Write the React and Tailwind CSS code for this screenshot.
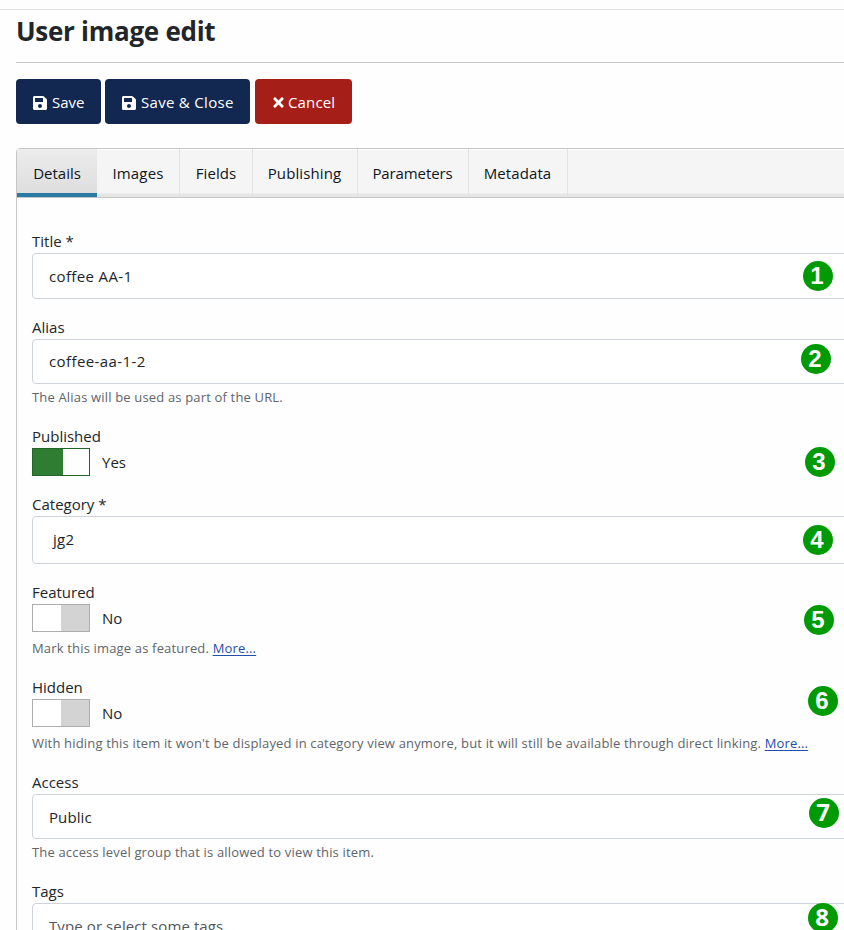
import React from "react";
import { FaSave, FaTimes } from "react-icons/fa";

const tabs = [
  { label: "Details", box: "w-20", text: "" },
  { label: "Images", box: "w-[83px]", text: "tracking-[0.15px]" },
  { label: "Fields", box: "w-[73px]", text: "tracking-[0.1px]" },
  { label: "Publishing", box: "w-[105px]", text: "tracking-[0.12px] -ml-px" },
  { label: "Parameters", box: "w-[111px]", text: "tracking-[-0.1px] -ml-px" },
  { label: "Metadata", box: "w-[99px]", text: "tracking-[0.1px] -ml-px" },
];

const markers = [
  { n: 1, pos: "left-[802.5px] top-[260.5px]", font: "font-['Liberation_Sans']" },
  { n: 2, pos: "left-[800.5px] top-[343.5px]", font: "font-['Liberation_Sans']" },
  { n: 3, pos: "left-[804.5px] top-[446.5px]", font: "font-['Liberation_Sans']" },
  { n: 4, pos: "left-[802.5px] top-[524.5px]", font: "font-['Liberation_Sans']" },
  { n: 5, pos: "left-[803.5px] top-[604.5px]", font: "font-['Liberation_Sans']" },
  { n: 6, pos: "left-[807.5px] top-[685.5px]", font: "font-['Liberation_Sans']" },
  { n: 7, pos: "left-[808.5px] top-[797.5px]", font: "font-['Open_Sans'] pb-0.5" },
  { n: 8, pos: "left-[807.5px] top-[902.5px]", font: "font-['Open_Sans'] pb-0.5" },
];

function Field({ label, children }) {
  return (
    <div className="flex flex-col">
      <div className="h-6 leading-6">{label}</div>
      {children}
    </div>
  );
}

function Input({ size = "h-[45px]", pad = "pl-4", children }) {
  return (
    <div className={`flex items-center rounded border border-[#ced4da] bg-white ${size} ${pad}`}>
      {children}
    </div>
  );
}

function Hint({ className = "h-6 pt-1", children }) {
  return (
    <div className={`flex items-center text-[13px] tracking-[0.165px] whitespace-pre text-[#5f656b] ${className}`}>
      {children}
    </div>
  );
}

function Switch({ on }) {
  return (
    <div className="flex h-7 items-center">
      {on ? (
        <div className="flex h-7 w-[58px] border border-[#256429] bg-white">
          <div className="w-[30px] bg-[#2f7d32]" />
        </div>
      ) : (
        <div className="flex h-7 w-[58px] justify-end border border-[#adadad] bg-white">
          <div className="w-7 bg-[#d3d3d3]" />
        </div>
      )}
      <span className="ml-3">{on ? "Yes" : "No"}</span>
    </div>
  );
}

function More() {
  return <a className="text-[#224faa] underline underline-offset-2">More...</a>;
}

export default function App() {
  return (
    <div className="relative h-[930px] w-[844px] overflow-hidden bg-[#fefefe] font-['Open_Sans',sans-serif] text-[15px] text-[#22262a]">
      <div className="h-2.5 border-b border-[#dedede]" />
      <h1 className="ml-4 h-[53px] border-b border-[#c6c6c6] text-[26px] leading-[43px] font-bold tracking-[-0.28px]">
        User image edit
      </h1>
      <div className="mt-4 ml-4 flex h-[45px] text-white">
        <button className="flex w-[85px] items-center rounded bg-[#132851] pt-0.5 pl-4">
          <FaSave className="mr-1 size-4" />
          <span>Save</span>
        </button>
        <button className="ml-1 flex w-[145px] items-center rounded bg-[#132851] pt-0.5 pl-4">
          <FaSave className="mr-1 size-4" />
          <span className="tracking-[0.3px]">Save &amp; Close</span>
        </button>
        <button className="ml-[5px] flex w-[97px] items-center rounded bg-[#a51f18] pt-0.5 pl-4">
          <FaTimes className="mr-0.5 size-[15px]" />
          <span className="tracking-[0.15px]">Cancel</span>
        </button>
      </div>

      <div className="mt-6 -mr-8 ml-4 h-[800px] rounded-t border border-[#c6c6c6]">
        <div className="flex h-[49px] rounded-t border-b border-[#c6c6c6] bg-[#f5f5f5] bg-linear-to-b from-[#f5f5f5] from-[44px] to-[#e6e6e6] to-[45px] text-[#0f1422] shadow-[inset_0_1px_0_#fff]">
          {tabs.map((t, i) => (
            <div
              key={t.label}
              className={
                i === 0
                  ? `flex items-center justify-center border-b-4 border-[#2a7ba3] bg-linear-to-b from-[#ececec] to-[#dedede] pt-1 ${t.box}`
                  : `flex items-center justify-center border-r border-[#e3e3e3] ${t.box}`
              }
            >
              <span className={t.text}>{t.label}</span>
            </div>
          ))}
        </div>

        <div className="flex flex-col gap-4 pt-[31px] pl-[15px]">
          <Field label="Title *">
            <Input size="h-[46px]">
              <span className="tracking-[0.36px]">coffee AA-1</span>
            </Input>
          </Field>
          <Field label="Alias">
            <Input>
              <span className="tracking-[0.4px]">coffee-aa-1-2</span>
            </Input>
            <Hint>The Alias will be used as part of the URL.</Hint>
          </Field>
          <Field label="Published">
            <Switch on />
          </Field>
          <Field label="Category *">
            <Input size="h-12 pb-0.5" pad="pl-5">
              <span className="tracking-[0.3px]">jg2</span>
            </Input>
          </Field>
          <Field label="Featured">
            <Switch />
            <Hint className="mt-1 h-[23px] pt-0.5">Mark this image as featured. <More /></Hint>
          </Field>
          <Field label="Hidden">
            <Switch />
            <Hint className="mt-1 h-[23px] pt-0.5">With hiding this item it won't be displayed in category view anymore, but it will still be available through direct linking. <More /></Hint>
          </Field>
          <Field label="Access">
            <Input size="h-[45px] pt-0.5">
              <span className="tracking-[0.1px]">Public</span>
            </Input>
            <Hint>The access level group that is allowed to view this item.</Hint>
          </Field>
          <Field label="Tags">
            <Input size="h-[45px] pt-0.5">
              <span className="tracking-[0.1px] text-[#50565c]">Type or select some tags</span>
            </Input>
          </Field>
        </div>
      </div>

      {markers.map((m) => (
        <div
          key={m.n}
          className={`absolute flex size-[30px] items-center justify-center rounded-full bg-[#009a05] pr-px text-2xl leading-none font-bold text-white ${m.pos} ${m.font}`}
        >
          {m.n}
        </div>
      ))}
    </div>
  );
}
